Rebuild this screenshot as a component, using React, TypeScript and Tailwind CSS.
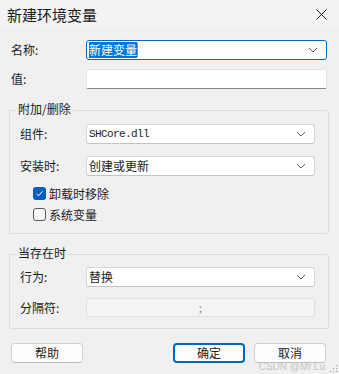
const font = "font-['Microsoft_YaHei','Noto_Sans_CJK_SC',sans-serif]";

function Chevron() {
  return (
    <svg width="10" height="6" viewBox="0 0 10 6" className="shrink-0">
      <path d="M1 1 L5 5 L9 1" fill="none" stroke="#5f5f5f" strokeWidth="1" />
    </svg>
  );
}

function Combo({ children, focused }: { children: React.ReactNode; focused?: boolean }) {
  return (
    <div
      className={
        'flex-1 h-[20px] flex items-center justify-between bg-white rounded-[3px] pl-[2px] pr-[8px] ' +
        (focused ? 'border border-[#0067c0]' : 'border border-[#d5d5d5] border-b-[#c4c4c4]')
      }
    >
      <div className="flex items-center text-[12px] text-[#1b1b1b] leading-none">{children}</div>
      <Chevron />
    </div>
  );
}

function Check({ checked, label }: { checked?: boolean; label: string }) {
  return (
    <div className="flex items-center h-[13px] ml-[13px]">
      {checked ? (
        <div className="w-[13px] h-[13px] rounded-[3px] bg-[#005fb8] flex items-center justify-center">
          <svg width="9" height="9" viewBox="0 0 9 9">
            <path d="M1.5 4.8 L3.6 6.8 L7.6 2.2" fill="none" stroke="white" strokeWidth="1" />
          </svg>
        </div>
      ) : (
        <div className="w-[13px] h-[13px] rounded-[3px] border border-[#5a5a5a] bg-[#f6f6f6]" />
      )}
      <span className="ml-[3px] text-[12px] text-[#1b1b1b] leading-none">{label}</span>
    </div>
  );
}

function Btn({ children, primary }: { children: React.ReactNode; primary?: boolean }) {
  return (
    <div
      className={
        'w-[72px] h-[20px] flex items-center justify-center bg-[#fdfdfd] rounded-[4px] text-[12px] text-[#1b1b1b] leading-none ' +
        (primary ? 'border-2 border-[#0067c0]' : 'border border-[#d0d0d0] border-b-[#bcbcbc]')
      }
    >
      {children}
    </div>
  );
}

export default function App() {
  return (
    <div className={`${font} relative w-[339px] h-[374px] bg-[#f0f0f0] overflow-hidden`}>
      {/* title bar */}
      <div className="h-[28px] bg-[#f3f3f6] flex items-center justify-between pl-[7px] pr-[12px]">
        <span className="text-[15px] text-[#1a1a1a] leading-none">新建环境变量</span>
        <svg width="11" height="11" viewBox="0 0 11 11">
          <path d="M0.5 0.5 L10.5 10.5 M10.5 0.5 L0.5 10.5" stroke="#1a1a1a" strokeWidth="1" />
        </svg>
      </div>

      {/* name */}
      <div className="flex items-center mt-[12px] pl-[11px] pr-[12px]">
        <span className="w-[75px] text-[12px] text-[#1b1b1b] leading-none">名称:</span>
        <Combo focused>
          <span className="bg-[#0078d7] text-white px-0 py-[2px]">新建变量</span>
          <span className="w-[1px] h-[14px] bg-[#e07020]" />
        </Combo>
      </div>

      {/* value */}
      <div className="flex items-center mt-[9px] pl-[11px] pr-[12px]">
        <span className="w-[75px] text-[12px] text-[#1b1b1b] leading-none">值:</span>
        <div className="flex-1 h-[20px] bg-white border border-[#e5e5e5] border-b-[#868686] rounded-[2px]" />
      </div>

      {/* group 1 */}
      <div className="relative mt-[21px] ml-[9px] mr-[10px] border border-[#dcdcdc] rounded-[2px] pt-[13px] pb-[12px] pl-[10px] pr-[13px]">
        <span className="absolute -top-[8px] left-[6px] px-[2px] bg-[#f0f0f0] text-[12px] text-[#1b1b1b] leading-none">附加/删除</span>
        <div className="flex items-center">
          <span className="w-[66px] text-[12px] text-[#1b1b1b] leading-none">组件:</span>
          <Combo>
            <span className="font-['Liberation_Mono',monospace] text-[11px] tracking-[-0.6px]">SHCore.dll</span>
          </Combo>
        </div>
        <div className="flex items-center mt-[12px]">
          <span className="w-[66px] text-[12px] text-[#1b1b1b] leading-none">安装时:</span>
          <Combo>创建或更新</Combo>
        </div>
        <div className="mt-[11px]">
          <Check checked label="卸载时移除" />
        </div>
        <div className="mt-[8px]">
          <Check label="系统变量" />
        </div>
      </div>

      {/* group 2 */}
      <div className="relative mt-[20px] ml-[9px] mr-[10px] border border-[#dcdcdc] rounded-[2px] pt-[12px] pb-[11px] pl-[10px] pr-[13px]">
        <span className="absolute -top-[8px] left-[6px] px-[2px] bg-[#f0f0f0] text-[12px] text-[#1b1b1b] leading-none">当存在时</span>
        <div className="flex items-center">
          <span className="w-[66px] text-[12px] text-[#1b1b1b] leading-none">行为:</span>
          <Combo>替换</Combo>
        </div>
        <div className="flex items-center mt-[11px]">
          <span className="w-[66px] text-[12px] text-[#1b1b1b] leading-none">分隔符:</span>
          <div className="flex-1 h-[19px] flex items-center justify-center bg-[#f4f4f4] border border-[#e0e0e0] rounded-[2px] text-[10px] text-[#7a7a7a] leading-none">
            ;
          </div>
        </div>
      </div>

      {/* buttons */}
      <div className="flex items-center justify-between mt-[14px] pl-[11px] pr-[13px]">
        <Btn>帮助</Btn>
        <div className="flex gap-[9px]">
          <Btn primary>确定</Btn>
          <Btn>取消</Btn>
        </div>
      </div>

      {/* watermark + grip */}
      <span className="absolute right-[14px] bottom-[2px] text-[10px] text-[#c4c4c4] leading-none font-['Liberation_Sans',sans-serif]">
        CSDN @Mr.Lu
      </span>
      <svg className="absolute right-[1px] bottom-[1px]" width="9" height="9" viewBox="0 0 9 9">
        <g fill="#9a9a9a">
          <rect x="7" y="1" width="1" height="1" />
          <rect x="4" y="4" width="1" height="1" />
          <rect x="7" y="4" width="1" height="1" />
          <rect x="1" y="7" width="1" height="1" />
          <rect x="4" y="7" width="1" height="1" />
          <rect x="7" y="7" width="1" height="1" />
        </g>
      </svg>
    </div>
  );
}
